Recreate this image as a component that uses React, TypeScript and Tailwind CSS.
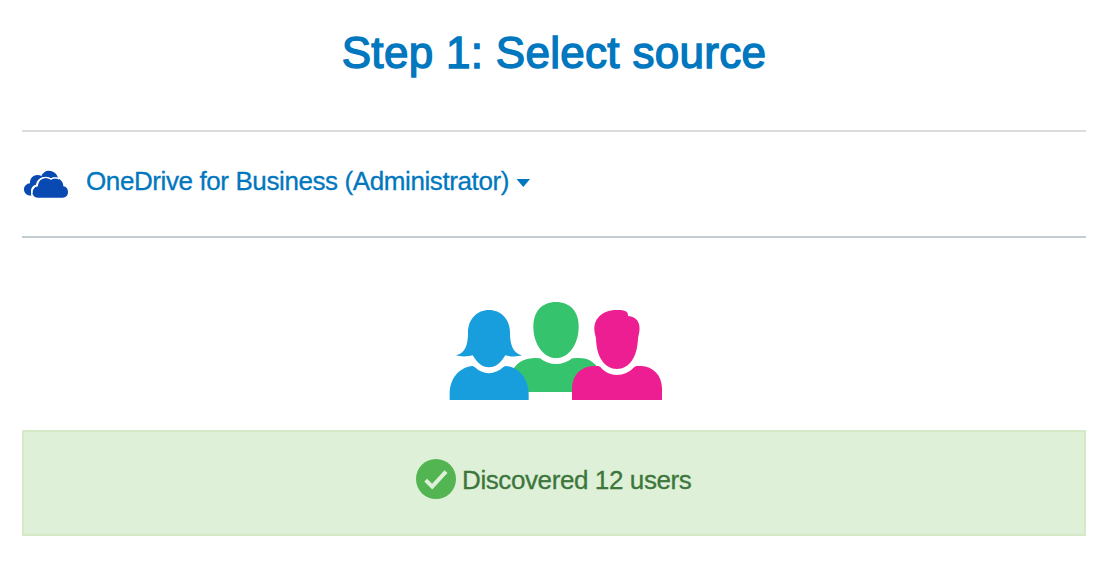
function CloudIcon() {
  return (
    <svg className="h-7 w-11 shrink-0" viewBox="27 45 132 84" fill="#094ab2">
      <path d="M49 122C36 122 27 115 27 103C27 93 35 86 45 85C44 72 53 60 67 60C72 60 76 61 79 63C84 53 91 47 101 47C115 47 126 56 129 69C120 66 112 67 105 71C98 64 85 65 77 69C68 74 64 82 63 89C53 91 48 98 48 108C48 114 48 118 49 122Z" />
      <path d="M69 128C58 128 52 120 52 111C52 101 59 94 69 94C68 80 78 69 92 69C99 69 104 71 108 74C112 71 116 70 121 70C135 70 145 80 145 94C154 95 159 102 159 111C159 121 153 128 143 128Z" />
      <path d="M51 114C50 103 57 93 67 92C67 78 77 67 92 67C99 67 104 69 108 72C114 68 125 67 132 72" fill="none" stroke="#fff" strokeWidth="4" />
    </svg>
  );
}

function UsersIcon() {
  return (
    <svg className="h-[110px] w-[230px]" viewBox="0 0 690 330">
      <path fill="#35c46d" d="M348 21C306 21 280 49 280 95C280 148 311 189 348 189C386 189 416 148 416 95C416 49 390 21 348 21Z" />
      <path fill="#35c46d" d="M221 220C236 199 257 189 286 189L300 190C328 213 368 213 397 190L412 189C440 188 459 198 472 216L430 291H262Z" />
      <path fill="#199edd" d="M147 45C112 45 84 72 84 113C84 148 77 173 48 181C63 186 83 185 98 181C111 203 126 217 147 217C168 217 183 203 196 181C211 185 231 186 246 181C218 173 210 148 210 113C210 72 182 45 147 45Z" />
      <path fill="#199edd" d="M29 315V299C28 256 53 217 98 213L104 216C129 241 165 240 190 216L196 213C241 217 267 256 266 299V315Z" />
      <path fill="#fff" d="M479 214C500 251 559 251 585 214L559 195H500Z" />
      <path fill="#ed1e91" d="M532 45C557 44 565 51 564 63C591 64 602 85 598 110L594 130C592 188 567 222 531 222C495 222 469 188 468 130C466 121 463 112 463 102C463 68 490 45 532 45Z" />
      <path fill="#ed1e91" d="M396 315V279C397 238 425 215 459 213H475L481 216C507 248 555 247 583 216L589 213H604C638 215 665 239 666 279V315Z" />
    </svg>
  );
}

function SuccessIcon() {
  return (
    <svg className="h-10 w-10 shrink-0" viewBox="0 0 40 40">
      <circle cx="20" cy="20" r="20" fill="#52b551" />
      <path d="M9.7 21.2L16.2 27.7L30 12.6" fill="none" stroke="#dff0d8" strokeWidth="4" />
    </svg>
  );
}

export default function App() {
  return (
    <main className="h-[586px] w-[1110px] bg-white pr-6 pl-[22px] font-['Liberation_Sans',Arial,sans-serif]">
      <header className="flex h-[130px] justify-center pt-[27px]">
        <h1 className="h-[52px] text-[44px] leading-[52px] font-normal tracking-[0.3px] whitespace-nowrap text-[#0077be] [-webkit-text-stroke:1.4px_#0077be]">
          Step 1: Select source
        </h1>
      </header>
      <section className="h-[108px] border-t-2 border-b-2 border-t-[#dcdcdc] border-b-[#c3cdd1]">
        <button className="flex h-[104px] items-start pt-[34px] pl-0.5 text-[#0077be]">
          <span className="pt-1"><CloudIcon /></span>
          <span className="ml-[18px] w-[424px] text-left text-[26px] leading-[30px] tracking-[-0.4px] whitespace-nowrap [-webkit-text-stroke:0.3px_#0077be]">
            OneDrive for Business (Administrator)
          </span>
          <svg className="mt-[13px] ml-[6px] h-2 w-[14px]" viewBox="0 0 14 8" fill="currentColor">
            <path d="M0.5 0H14L7.25 8Z" />
          </svg>
        </button>
      </section>
      <div className="flex h-[192px] justify-center pt-[57px] pl-0.5">
        <UsersIcon />
      </div>
      <section className="flex h-[106px] items-start justify-center border-2 border-[#d6e9c6] bg-[#dff0d8] pt-[27px]">
        <SuccessIcon />
        <p className="mt-[6px] ml-[6px] w-[230px] text-[26px] leading-[30px] tracking-[-0.4px] whitespace-nowrap text-[#3c763d] [-webkit-text-stroke:0.3px_#3c763d]">
          Discovered 12 users
        </p>
      </section>
    </main>
  );
}
